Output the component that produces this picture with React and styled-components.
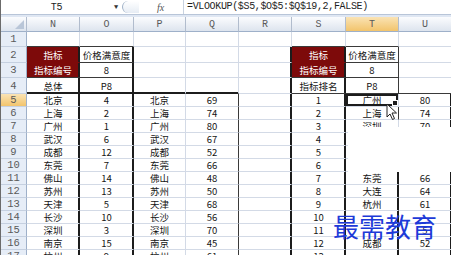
import React from "react";
import styled, { createGlobalStyle } from "styled-components";

const GlobalStyle = createGlobalStyle`
  html, body { margin: 0; padding: 0; background: #ffffff; }
  body {
    width: 451px;
    height: 255px;
    overflow: hidden;
    font-family: "Noto Sans CJK SC", sans-serif;
  }
`;

const GRID = "#d3dae6";
const DARK = "#3a3a3a";
const THICK = "#1c1c1c";
const RED = "#7d0a0a";

const Page = styled.div`
  position: relative;
  width: 451px;
  height: 255px;
  background: #dfe7f3;
  border-left: 1px solid #6b6b6b;
  box-sizing: border-box;
`;

const FormulaBar = styled.div`
  display: flex;
  align-items: center;
  height: 14px;
  background: #ffffff;
  border-bottom: 1px solid #b8c5d8;
  margin-bottom: 2px;
  font-family: "Liberation Mono", monospace;
  font-size: 10px;
  color: #1e1e1e;
`;

const NameBox = styled.div`
  width: 111px;
  text-align: center;
  letter-spacing: -0.3px;
`;

const DropArrow = styled.div`
  width: 8px;
  font-size: 7px;
  color: #333;
  text-align: center;
`;

const RoundButton = styled.div`
  width: 16px;
  height: 12px;
  margin-left: 2px;
  border-left: 1px solid #9fb0c6;
  border-radius: 8px 0 0 8px;
  background: linear-gradient(#ffffff, #e6ecf4);
`;

const FxBox = styled.div`
  width: 44px;
  padding-left: 18px;
  box-sizing: border-box;
  font-family: "Liberation Serif", serif;
  font-style: italic;
  font-size: 10px;
  color: #555;
`;

const Formula = styled.div`
  flex: 1;
  height: 14px;
  line-height: 14px;
  padding-left: 3px;
  border-left: 1px solid #c8d2e0;
  letter-spacing: -0.35px;
  font-size: 10px;
`;

const Sheet = styled.div`
  display: grid;
  grid-template-columns: 26px 53px 54px 52px 53px 53px 54px 53px 53px;
  grid-template-rows: 15px 15px 16px 15px 16px repeat(13, 13px);
  background: #ffffff;
`;

const ColHead = styled.div`
  display: flex;
  align-items: center;
  justify-content: center;
  box-sizing: border-box;
  border-right: 1px solid #b1bccd;
  border-bottom: 1px solid #9eb0c9;
  background: ${(p) =>
    p.$active
      ? "linear-gradient(#fae3b4, #f2c46c)"
      : "linear-gradient(#fbfcfe, #dde4ee)"};
  font-family: "Liberation Mono", monospace;
  font-size: 10px;
  color: #5a5a5a;
`;

const Corner = styled.div`
  position: relative;
  box-sizing: border-box;
  border-right: 1px solid #b1bccd;
  border-bottom: 1px solid #9eb0c9;
  background: linear-gradient(#fbfcfe, #dde4ee);
  &::after {
    content: "";
    position: absolute;
    right: 2px;
    bottom: 2px;
    border-left: 9px solid transparent;
    border-bottom: 9px solid #b9c6d8;
  }
`;

const RowHead = styled.div`
  display: flex;
  align-items: center;
  justify-content: center;
  box-sizing: border-box;
  border-right: 1px solid #9eb0c9;
  border-bottom: 1px solid #c5d0e0;
  background: ${(p) =>
    p.$active ? "linear-gradient(#fae3b4, #f2c46c)" : "#e6edf7"};
  font-family: "Liberation Mono", monospace;
  font-size: 10.5px;
  line-height: 12px;
  color: #5a5a5a;
`;

const lineColor = (kind, bg) => {
  if (kind === "thick") return THICK;
  if (kind === "dark") return DARK;
  if (kind === "none") return bg || "#ffffff";
  return GRID;
};

const Cell = styled.div`
  position: relative;
  display: flex;
  align-items: center;
  justify-content: center;
  box-sizing: border-box;
  overflow: hidden;
  white-space: nowrap;
  background: ${(p) => p.$bg || "#ffffff"};
  color: ${(p) => (p.$bg ? "#ffffff" : "#141414")};
  font-size: 9.5px;
  line-height: 12px;
  border-right: 1px solid ${(p) => lineColor(p.$r, p.$bg)};
  border-bottom: 1px solid ${(p) => lineColor(p.$b, p.$bg)};
  box-shadow: ${(p) => {
    const s = [];
    if (p.$r === "thick") s.push(`inset -1px 0 0 ${THICK}`);
    if (p.$b === "thick") s.push(`inset 0 -1px 0 ${THICK}`);
    if (p.$sel) s.push(`inset 0 0 0 2px ${THICK}`);
    return s.length ? s.join(", ") : "none";
  }};
`;

const Handle = styled.span`
  position: absolute;
  right: 0;
  bottom: 0;
  width: 4px;
  height: 4px;
  background: #1c1c1c;
  border: 1px solid #ffffff;
`;

const Blank = styled.div`
  position: absolute;
  left: 347px;
  top: 127px;
  width: 104px;
  height: 45px;
  background: #ffffff;
`;

const Pointer = styled.svg`
  position: absolute;
  left: 385px;
  top: 103px;
`;

const Watermark = styled.div`
  position: absolute;
  left: 332px;
  top: 211px;
  font-family: "Noto Sans CJK SC", sans-serif;
  font-size: 26px;
  line-height: 30px;
  color: #1d3ad8;
`;

const cities = ["北京", "上海", "广州", "武汉", "成都", "东莞", "佛山", "苏州", "天津", "长沙", "深圳", "南京", "杭州"];
const ranks = ["4", "2", "1", "6", "12", "7", "14", "13", "5", "10", "3", "15", "9"];
const scores = ["69", "74", "80", "67", "52", "66", "48", "50", "68", "56", "70", "45", "61"];
const lookup = [
  ["广州", "80"], ["上海", "74"], ["深圳", "70"], ["", ""], ["", ""], ["", ""],
  ["东莞", "66"], ["大连", "64"], ["杭州", "61"], ["", ""], ["", "5"], ["成都", "52"], ["", ""],
];

// each row: 8 cells for N..U, each { t, r, b, bg, sel }
const buildRows = () => {
  const rows = [];
  const empty = () => Array.from({ length: 8 }, () => ({}));

  const r1 = empty();
  r1[0].b = "dark"; r1[1].b = "dark"; r1[5].b = "dark"; r1[6].b = "dark";
  rows.push(r1);

  const r2 = empty();
  r2[0] = { t: "指标", bg: RED, b: "none", r: "thick" };
  r2[1] = { t: "价格满意度", b: "dark", r: "thick" };
  r2[4] = { r: "thick" };
  r2[5] = { t: "指标", bg: RED, b: "none", r: "thick" };
  r2[6] = { t: "价格满意度", b: "dark", r: "dark" };
  rows.push(r2);

  const r3 = empty();
  r3[0] = { t: "指标编号", bg: RED, b: "dark", r: "thick" };
  r3[1] = { t: "8", b: "dark", r: "thick" };
  r3[4] = { r: "thick" };
  r3[5] = { t: "指标编号", bg: RED, b: "dark", r: "thick" };
  r3[6] = { t: "8", b: "dark", r: "dark" };
  rows.push(r3);

  const r4 = empty();
  r4[0] = { t: "总体", b: "thick", r: "thick" };
  r4[1] = { t: "P8", b: "thick", r: "thick" };
  r4[2] = { b: "thick" };
  r4[3] = { b: "thick" };
  r4[4] = { r: "thick" };
  r4[5] = { t: "指标排名", b: "dark", r: "thick" };
  r4[6] = { t: "P8", b: "dark", r: "dark" };
  r4[7] = { b: "dark" };
  rows.push(r4);

  cities.forEach((c, i) => {
    const row = empty();
    const [tc, tv] = lookup[i];
    row[0] = { t: c, r: "thick" };
    row[1] = { t: ranks[i], r: "thick" };
    row[2] = { t: c };
    row[3] = { t: scores[i], r: "dark" };
    row[4] = { r: "thick" };
    row[5] = { t: String(i + 1), r: "thick" };
    row[6] = { t: tc, sel: i === 0, r: i >= 6 ? "thick" : i === 1 ? "dark" : undefined };
    row[7] = { t: tv, r: "thick" };
    rows.push(row);
  });
  return rows;
};

const rows = buildRows();
const letters = ["N", "O", "P", "Q", "R", "S", "T", "U"];

export default function App() {
  return (
    <Page>
      <GlobalStyle />
      <FormulaBar>
        <NameBox>T5</NameBox>
        <DropArrow>▼</DropArrow>
        <RoundButton />
        <FxBox>fx</FxBox>
        <Formula>=VLOOKUP($S5,$O$5:$Q$19,2,FALSE)</Formula>
      </FormulaBar>
      <Sheet>
        <Corner />
        {letters.map((l) => (
          <ColHead key={l} $active={l === "T"}>{l}</ColHead>
        ))}
        {rows.map((row, ri) => (
          <React.Fragment key={ri}>
            <RowHead $active={ri === 4}>{ri + 1}</RowHead>
            {row.map((c, ci) => (
              <Cell key={ci} $r={c.r} $b={c.b} $bg={c.bg} $sel={c.sel}>
                {c.t}
                {c.sel && <Handle />}
              </Cell>
            ))}
          </React.Fragment>
        ))}
      </Sheet>
      <Blank />
      <Pointer width="12" height="18" viewBox="0 0 12 18">
        <path d="M1 1 L1 14 L4 11 L6.5 16.5 L8.5 15.5 L6 10 L10.5 10 Z" fill="#ffffff" stroke="#222" strokeWidth="1" />
      </Pointer>
      <Watermark>最需教育</Watermark>
    </Page>
  );
}
